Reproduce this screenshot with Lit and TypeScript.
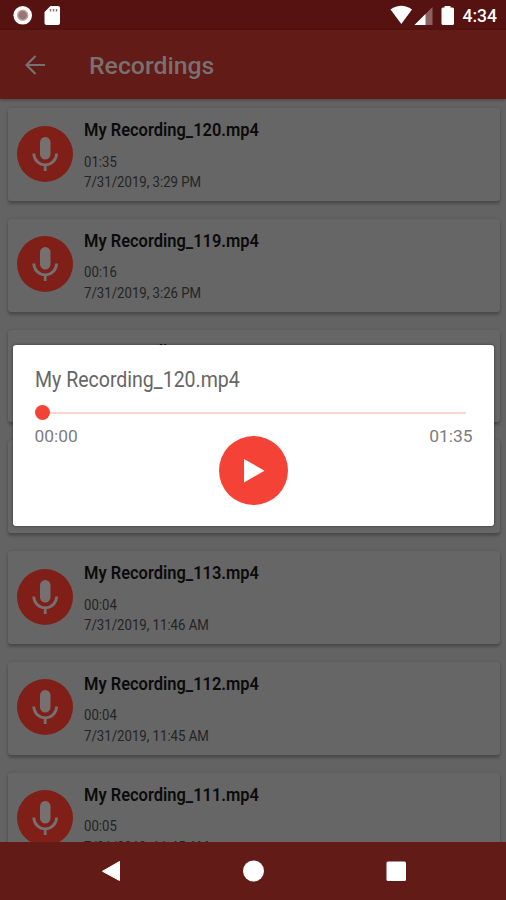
import { LitElement, html, css } from "lit";
import { customElement, property } from "lit/decorators.js";

interface Recording {
  name: string;
  length: string;
  date: string;
}

const RECORDINGS: Recording[] = [
  { name: "My Recording_120.mp4", length: "01:35", date: "7/31/2019, 3:29 PM" },
  { name: "My Recording_119.mp4", length: "00:16", date: "7/31/2019, 3:26 PM" },
  { name: "My Recording_118.mp4", length: "00:10", date: "7/31/2019, 3:20 PM" },
  { name: "My Recording_114.mp4", length: "00:04", date: "7/31/2019, 11:47 AM" },
  { name: "My Recording_113.mp4", length: "00:04", date: "7/31/2019, 11:46 AM" },
  { name: "My Recording_112.mp4", length: "00:04", date: "7/31/2019, 11:45 AM" },
  { name: "My Recording_111.mp4", length: "00:05", date: "7/31/2019, 11:45 AM" },
];

@customElement("recording-card")
export class RecordingCard extends LitElement {
  @property({ attribute: false }) item!: Recording;

  static styles = css`
    :host {
      display: flex;
      box-sizing: border-box;
      height: 92.8px;
      flex: none;
      padding: 0 10px;
      background: #666;
      border-radius: 3px;
      box-shadow: 0 3px 3px rgba(0, 0, 0, 0.22), 0 0 3px rgba(0, 0, 0, 0.13);
    }
    .badge {
      width: 56px;
      height: 56px;
      margin: 17.5px 11px 0 -1px;
      border-radius: 50%;
      background: #7f1f18;
      display: flex;
      align-items: center;
      justify-content: center;
    }
    .text {
      display: flex;
      flex-direction: column;
      align-items: flex-start;
      padding-top: 11px;
      white-space: nowrap;
    }
    .name {
      font-size: 18.5px;
      line-height: 22px;
      font-weight: 600;
      color: #0b0b0b;
      transform: scaleX(0.89);
      transform-origin: 0 0;
    }
    .meta {
      font-size: 15.2px;
      line-height: 20.5px;
      color: #242424;
      transform: scaleX(0.868);
      transform-origin: 0 0;
    }
    .length {
      margin-top: 10.5px;
    }
  `;

  render() {
    return html`
      <div class="badge">
        <svg width="28" height="36" viewBox="0 0 28 36">
          <rect x="9" y="1" width="10.5" height="22.5" rx="5.25" fill="#767170" />
          <path d="M2.8 17.5a11.4 11.4 0 0 0 22.8 0M14.2 28.5v6.5" fill="none" stroke="#767170" stroke-width="2.8" />
        </svg>
      </div>
      <div class="text">
        <div class="name">${this.item.name}</div>
        <div class="meta length">${this.item.length}</div>
        <div class="meta">${this.item.date}</div>
      </div>
    `;
  }
}

@customElement("player-dialog")
export class PlayerDialog extends LitElement {
  static styles = css`
    :host {
      display: flex;
      flex-direction: column;
      box-sizing: border-box;
      width: 481.500px;
      height: 181px;
      padding: 21px 21.500px 0 22px;
      background: #fff;
      border-radius: 3px;
      box-shadow: 0 0 3px rgba(0, 0, 0, 0.5);
    }
    .title {
      align-self: flex-start;
      font-size: 22.5px;
      line-height: 26px;
      color: #666;
      white-space: nowrap;
      transform: scaleX(0.868);
      transform-origin: 0 0;
    }
    .seek {
      display: flex;
      align-items: center;
      height: 15px;
      margin: 13px 7px 0 0;
    }
    .thumb {
      width: 15px;
      height: 15px;
      border-radius: 50%;
      background: #f44336;
    }
    .track {
      flex: 1;
      height: 2px;
      background: #fcd5cc;
    }
    .times {
      display: flex;
      justify-content: space-between;
      margin-top: 6px;
      font-size: 17.4px;
      line-height: 20px;
      color: #7c7c7c;
    }
    .play {
      align-self: center;
      width: 69px;
      height: 69px;
      margin-top: -10px;
      border-radius: 50%;
      background: #f44336;
      display: flex;
    }
  `;

  render() {
    return html`
      <div class="title">My Recording_120.mp4</div>
      <div class="seek"><div class="thumb"></div><div class="track"></div></div>
      <div class="times"><span>00:00</span><span>01:35</span></div>
      <div class="play">
        <svg width="69" height="69" viewBox="0 0 69 69"><path d="M25 23v23.5L45.5 34.7z" fill="#fff" /></svg>
      </div>
    `;
  }
}

@customElement("app-root")
export class AppRoot extends LitElement {
  static styles = css`
    :host {
      display: flex;
      flex-direction: column;
      position: relative;
      width: 506px;
      height: 900px;
      overflow: hidden;
      background: #636363;
      font-family: Roboto, "Liberation Sans", sans-serif;
    }
    .status {
      display: flex;
      justify-content: space-between;
      height: 30px;
      flex: none;
      background: #551210;
    }
    .bar {
      display: flex;
      align-items: center;
      height: 69px;
      flex: none;
      background: #621b16;
      box-shadow: 0 1px 3px rgba(0, 0, 0, 0.3);
      color: #777170;
    }
    .bar svg {
      margin-left: 25px;
    }
    .heading {
      margin: 2px 0 0 44px;
      font-size: 24.8px;
      font-weight: 500;
      line-height: 30px;
    }
    .list {
      flex: 1;
      min-height: 0;
      overflow: hidden;
      display: flex;
      flex-direction: column;
      gap: 18px;
      padding: 9px 6px 0 8px;
    }
    .nav {
      flex: none;
      height: 58px;
      background: #621b16;
    }
    player-dialog {
      position: absolute;
      left: 12.5px;
      top: 345px;
    }
  `;

  render() {
    return html`
      <div class="status">
        <svg width="70" height="30" viewBox="0 0 70 30">
          <circle cx="22.7" cy="15.3" r="9.3" fill="#fff" />
          <circle cx="22.7" cy="15.3" r="5" fill="#9b7473" stroke="#bda3a2" stroke-width="1.5" />
          <path d="M50.5 6H58q2 0 2 2v15q0 2-2 2H46.5q-2 0-2-2V12z" fill="#fff" />
          <path d="M50.5 9v2.500M53.500 9v2.500M56.500 9v2.500" stroke="#8d6766" stroke-width="1.400" />
        </svg>
        <svg width="126" height="30" viewBox="380 0 126 30">
          <path d="M390.5 9.5Q401.2 2 412 9.500L401.300 24z" fill="#fff" />
          <path d="M432.5 7v18h-18z" fill="#8d6160" />
          <path d="M425.5 14v11h-11z" fill="#fff" />
          <path d="M444.5 6h6v1.500h2q1.500 0 1.500 1.500v14.500q0 1.500-1.500 1.500h-9.500q-1.500 0-1.500-1.500V9q0-1.500 1.500-1.500h1.500z" fill="#fff" />
          <text x="462.5" y="22" font-size="17.5" font-weight="500" textLength="34.5" lengthAdjust="spacingAndGlyphs" fill="#fff">4:34</text>
        </svg>
      </div>
      <div class="bar">
        <svg width="20" height="20" viewBox="0 0 20 20">
          <path d="M20 10H2M10.5 1 1.5 10l9 9" fill="none" stroke="#777170" stroke-width="2.2" />
        </svg>
        <div class="heading">Recordings</div>
      </div>
      <div class="list">
        ${RECORDINGS.map((r) => html`<recording-card .item=${r}></recording-card>`)}
      </div>
      <div class="nav">
        <svg width="506" height="58" viewBox="0 842 506 58">
          <path d="M102.5 871.3 119.5 861.5V880.5z" fill="#fff" stroke="#fff" stroke-linejoin="round" />
          <circle cx="253.5" cy="871" r="10.5" fill="#fff" />
          <rect x="386.5" y="861.5" width="19.5" height="19.5" rx="1.5" fill="#fff" />
        </svg>
      </div>
      <player-dialog></player-dialog>
    `;
  }
}
